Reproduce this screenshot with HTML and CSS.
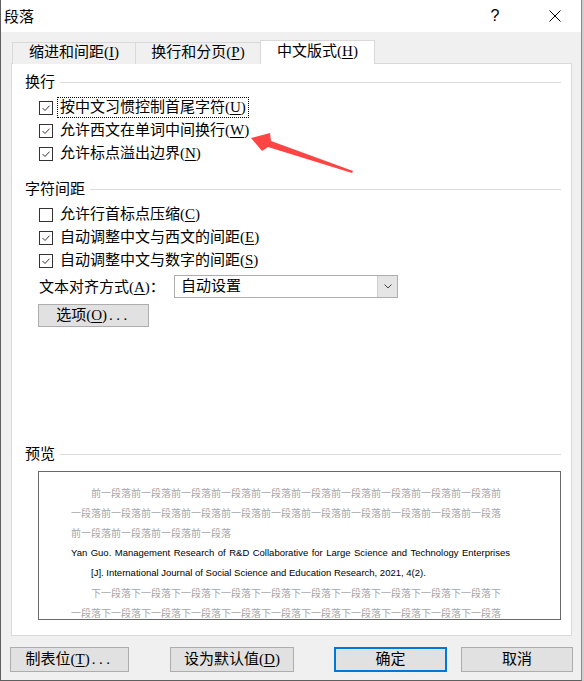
FILE: index.html
```html
<!DOCTYPE html>
<html lang="zh-CN">
<head>
  <meta charset="UTF-8">
  <meta name="viewport" content="width=device-width, initial-scale=1.0">
  <title>段落</title>
  <link rel="stylesheet" href="styles.css">
</head>
<body>
  <div class="dialog">
    <div class="titlebar">
      <span class="title">段落</span>
      <span class="help">?</span>
      <svg class="close" viewBox="0 0 12 12"><path d="M0.5 0.5 L11.5 11.5 M11.5 0.5 L0.5 11.5" stroke="#000" stroke-width="1" fill="none"/></svg>
    </div>

    <div class="tabs">
      <div class="tab tab-indent">缩进和间距(<u>I</u>)</div>
      <div class="tab tab-break">换行和分页(<u>P</u>)</div>
      <div class="tab tab-asian active">中文版式(<u>H</u>)</div>
    </div>

    <div class="panel">
      <div class="group">
        <div class="group-head">换行</div>
        <div class="check">
          <span class="box"><svg viewBox="0 0 12 12"><path d="M2.5 6 L5 8.5 L9.5 3.7" fill="none" stroke="#333"/></svg></span>
          <span class="label focus">按中文习惯控制首尾字符(<u>U</u>)</span>
        </div>
        <div class="check">
          <span class="box"><svg viewBox="0 0 12 12"><path d="M2.5 6 L5 8.5 L9.5 3.7" fill="none" stroke="#333"/></svg></span>
          <span class="label">允许西文在单词中间换行(<u>W</u>)</span>
        </div>
        <div class="check">
          <span class="box"><svg viewBox="0 0 12 12"><path d="M2.5 6 L5 8.5 L9.5 3.7" fill="none" stroke="#333"/></svg></span>
          <span class="label">允许标点溢出边界(<u>N</u>)</span>
        </div>
      </div>

      <div class="group">
        <div class="group-head">字符间距</div>
        <div class="check">
          <span class="box"></span>
          <span class="label">允许行首标点压缩(<u>C</u>)</span>
        </div>
        <div class="check">
          <span class="box"><svg viewBox="0 0 12 12"><path d="M2.5 6 L5 8.5 L9.5 3.7" fill="none" stroke="#333"/></svg></span>
          <span class="label">自动调整中文与西文的间距(<u>E</u>)</span>
        </div>
        <div class="check">
          <span class="box"><svg viewBox="0 0 12 12"><path d="M2.5 6 L5 8.5 L9.5 3.7" fill="none" stroke="#333"/></svg></span>
          <span class="label">自动调整中文与数字的间距(<u>S</u>)</span>
        </div>
        <div class="align-row">
          <span class="align-label">文本对齐方式(<u>A</u>)：</span>
          <div class="select">
            <span class="select-text">自动设置</span>
            <span class="select-btn"><svg viewBox="0 0 8 5"><path d="M0.5 0.5 L4 4 L7.5 0.5" fill="none" stroke="#444"/></svg></span>
          </div>
        </div>
        <div class="btn btn-options">选项(<u>O</u>)<span class="dots">...</span></div>
      </div>

      <div class="preview">
        <div class="group-head">预览</div>
        <div class="preview-box">
          <div class="pv-gray">前一段落前一段落前一段落前一段落前一段落前一段落前一段落前一段落前一段落前一段落前一段落前一段落前一段落前一段落前一段落前一段落前一段落前一段落前一段落前一段落前一段落前一段落前一段落前一段落前一段落</div>
          <div class="pv-ref pv-ref-first">Yan Guo. Management Research of R&amp;D Collaborative for Large Science and Technology Enterprises</div>
          <div class="pv-ref pv-ref-next">[J]. International Journal of Social Science and Education Research, 2021, 4(2).</div>
          <div class="pv-gray">下一段落下一段落下一段落下一段落下一段落下一段落下一段落下一段落下一段落下一段落下一段落下一段落下一段落下一段落下一段落下一段落下一段落下一段落下一段落下一段落下一段落</div>
        </div>
      </div>
    </div>

    <div class="buttons">
      <div class="btn btn-tabs">制表位(<u>T</u>)<span class="dots">...</span></div>
      <div class="btn btn-default">设为默认值(<u>D</u>)</div>
      <div class="btn btn-ok">确定</div>
      <div class="btn btn-cancel">取消</div>
    </div>

    <!-- 红色标注箭头 -->
    <svg class="arrow" viewBox="0 0 584 681">
      <polygon points="251,138 270,133 271,141 353,171 352,173 268,147 262,151" fill="#f44"/>
    </svg>
  </div>
</body>
</html>
```

FILE: styles.css
```css
* {
  box-sizing: border-box;
}
html, body {
  margin: 0;
  padding: 0;
}
body {
  background-color: #cfcfcf;
  font-family: "Liberation Serif", "Noto Sans CJK SC", serif;
  font-size: 15px;
  color: #000;
}
u {
  text-decoration-thickness: 1px;
  text-underline-offset: 2px;
}
.dialog {
  position: relative;
  width: 582px;
  height: 681px;
  background-color: #f0f0f0;
  border-left: 1px solid #5f5f5f;
  border-right: 1px solid #8a8a8a;
  border-bottom: 1px solid #5f5f5f;
}
.titlebar {
  display: flex;
  align-items: center;
  height: 32px;
  background-color: #fff;
  padding-left: 3px;
}
.title {
  flex: 1;
  font-family: "Noto Sans CJK SC", sans-serif;
  font-size: 15px;
  line-height: 20px;
}
.help {
  width: 20px;
  text-align: center;
  font-family: "Liberation Sans", sans-serif;
  font-size: 16px;
  margin-right: 44px;
}
.close {
  width: 12px;
  height: 12px;
  margin-right: 20px;
}
.tabs {
  display: flex;
  align-items: flex-end;
  height: 24px;
  margin: 8px 0 -1px 11px;
}
.tab {
  height: 22px;
  border: 1px solid #d9d9d9;
  border-bottom: 0;
  background-color: #f0f0f0;
  text-align: center;
  line-height: 19px;
}
.tab + .tab {
  margin-left: -1px;
}
.tab-indent {
  width: 124px;
}
.tab-break {
  width: 126px;
}
.tab-asian {
  width: 115px;
}
.tab.active {
  position: relative;
  z-index: 1;
  height: 24px;
  background-color: #fff;
  line-height: 21px;
}
.panel {
  display: flex;
  flex-direction: column;
  width: 561px;
  height: 573px;
  margin-left: 10px;
  background-color: #fff;
  border: 1px solid #d9d9d9;
  padding: 8px 10px 15px 13px;
}
.group + .group {
  margin-top: 14px;
}
.group-head {
  display: flex;
  align-items: center;
  height: 20px;
  line-height: 20px;
  margin-bottom: 4px;
}
.group-head::after {
  content: "";
  flex: 1;
  border-top: 1px solid #dcdcdc;
  margin-left: 5px;
}
.check {
  display: flex;
  align-items: center;
  height: 23px;
  padding-left: 14px;
}
.box {
  flex: none;
  width: 14px;
  height: 14px;
  border: 1px solid #333;
  background-color: #fff;
}
.box svg {
  display: block;
  width: 12px;
  height: 12px;
}
.label {
  margin-left: 4px;
  padding: 0 2px;
  border: 1px dotted transparent;
  line-height: 19px;
}
.label.focus {
  border-color: #000;
}
.align-row {
  display: flex;
  align-items: center;
  height: 23px;
  margin-top: 3px;
  padding-left: 14px;
}
.align-label {
  width: 135px;
  line-height: 20px;
}
.select {
  display: flex;
  width: 224px;
  height: 23px;
  border: 1px solid #adadad;
  background-color: #fff;
}
.select-text {
  flex: 1;
  padding-left: 6px;
  line-height: 21px;
}
.select-btn {
  display: flex;
  align-items: center;
  justify-content: center;
  width: 20px;
  background-color: #e5e5e5;
  border-left: 1px solid #cfcfcf;
}
.select-btn svg {
  width: 8px;
  height: 5px;
}
.btn {
  height: 24px;
  background-color: #e1e1e1;
  border: 1px solid #adadad;
  text-align: center;
  line-height: 22px;
}
.dots {
  letter-spacing: 3.5px;
  margin-left: 2px;
}
.btn-options {
  width: 111px;
  margin: 6px 0 0 13px;
  height: 23px;
  line-height: 21px;
}
.preview {
  margin-top: auto;
}
.preview-box {
  height: 149px;
  margin: 7px 0 0 13px;
  border: 1px solid #696969;
  padding: 11px 50px 0 32px;
  overflow: hidden;
}
.pv-gray {
  color: #a6a6a6;
  font-family: "Noto Sans CJK SC", sans-serif;
  font-size: 10px;
  line-height: 20px;
  text-indent: 20px;
}
.pv-ref {
  font-family: "Liberation Sans", sans-serif;
  font-size: 9.5px;
  line-height: 20px;
  white-space: nowrap;
}
.pv-ref-first {
  text-align: justify;
  text-align-last: justify;
  white-space: normal;
}
.pv-ref-next {
  padding-left: 20px;
}
.buttons {
  display: flex;
  margin-top: 11px;
  padding-left: 9px;
}
.buttons .btn {
  height: 25px;
  line-height: 23px;
}
.btn-tabs {
  width: 119px;
}
.btn-default {
  width: 124px;
  margin-left: 41px;
}
.btn-ok {
  width: 113px;
  margin-left: 40px;
  border: 2px solid #0078d7;
}
.buttons .btn-ok {
  line-height: 21px;
}
.btn-cancel {
  width: 112px;
  margin-left: 14px;
}
.arrow {
  position: absolute;
  top: 0;
  left: -1px;
  width: 584px;
  height: 681px;
  pointer-events: none;
}
```
